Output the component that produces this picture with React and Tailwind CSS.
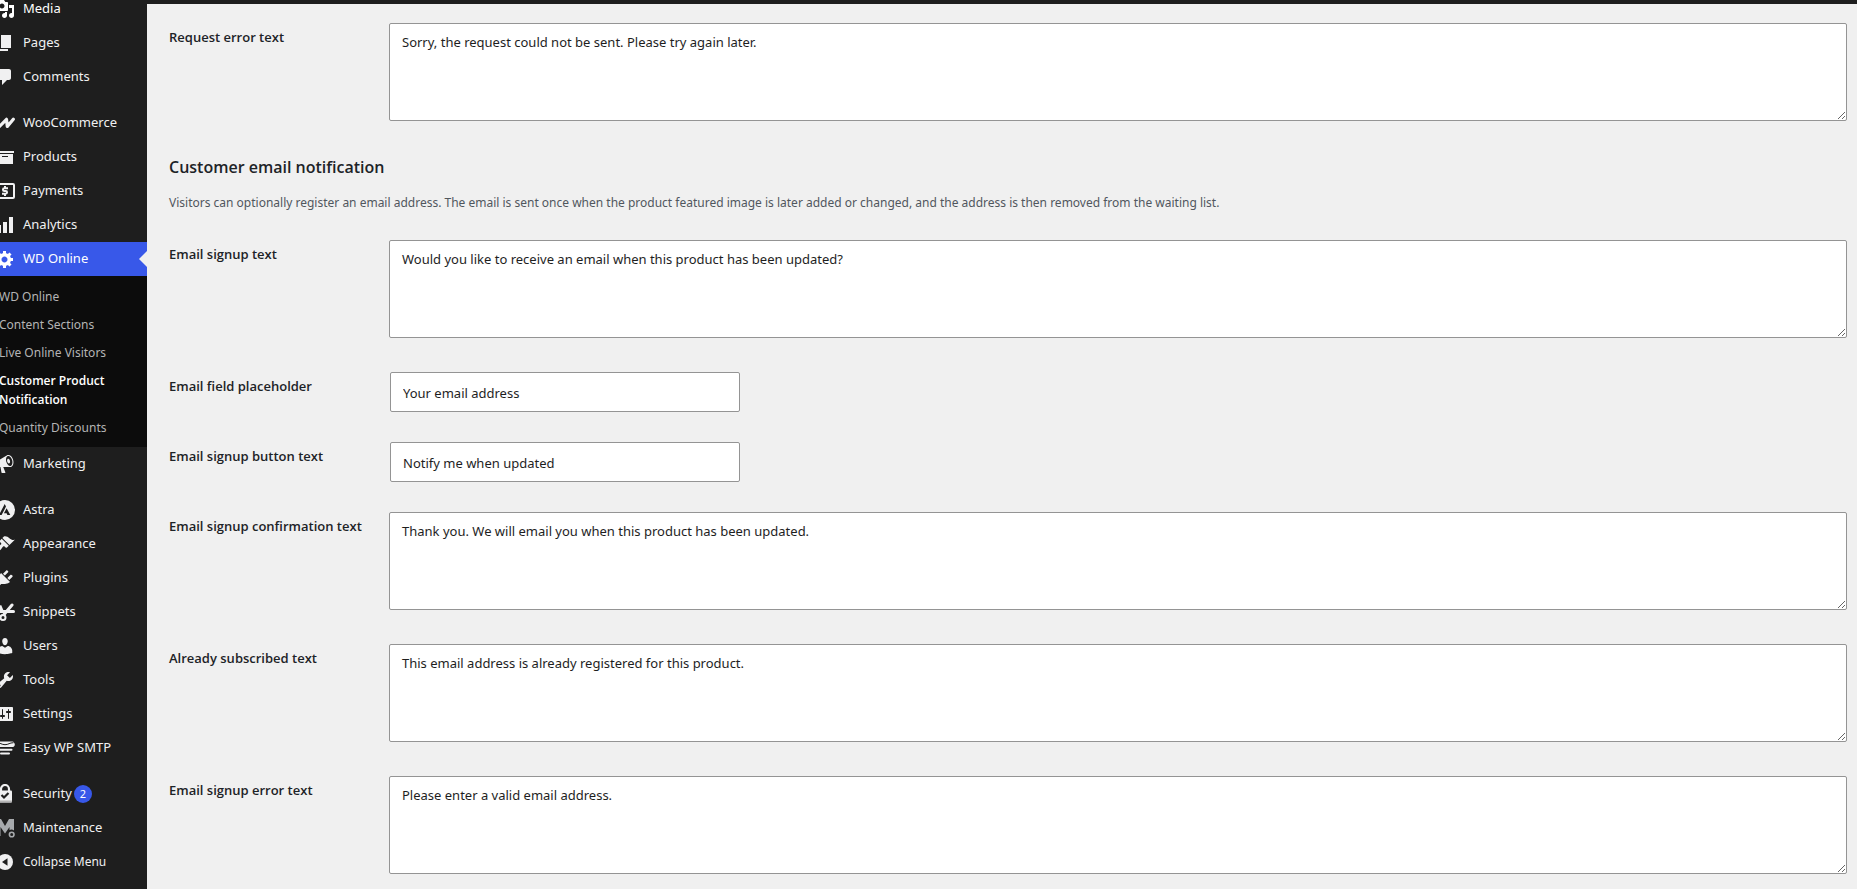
import React, { useState } from 'react';

const Dashicon = ({ d }) => (
    <svg viewBox="0 0 20 20" className="h-5 w-5" fill="currentColor" fillRule="evenodd" aria-hidden="true">
        <path d={d} />
    </svg>
);

const WooIcon = () => (
    <svg viewBox="0 0 20 20" className="h-5 w-5" fill="none" stroke="currentColor" strokeWidth="3.2" strokeLinejoin="round" strokeLinecap="round" aria-hidden="true">
        <path d="M1.500 6.300 4.500 13.500 11.500 6.300 12.300 13.500 18.300 6.300" />
    </svg>
);

const PaymentsIcon = () => (
    <svg viewBox="0 0 20 20" className="h-5 w-5" fill="none" stroke="currentColor" strokeWidth="2" aria-hidden="true">
        <rect x="1" y="3" width="18" height="14" rx="1" />
        <path d="M13 7.300H9.300a1.350 1.350 0 0 0 0 2.700h1.400a1.350 1.350 0 0 1 0 2.700H7M10 5v2.500M10 12.500V15" />
    </svg>
);

const AstraIcon = () => (
    <svg viewBox="0 0 20 20" className="h-5 w-5" aria-hidden="true">
        <circle cx="10" cy="10" r="10" fill="currentColor" />
        <path d="M9.700 4 4 15h2.600L11 6.600zM11.600 8.200 8.900 13.300h2.700l.8 1.700h2.900z" fill="#1e1e1e" />
    </svg>
);

const SnippetsIcon = () => (
    <svg viewBox="0 0 20 20" className="h-5 w-5" fill="none" stroke="currentColor" aria-hidden="true">
        <circle cx="3.500" cy="7" r="2.400" strokeWidth="2" />
        <circle cx="8" cy="15.500" r="2.500" strokeWidth="2" />
        <path d="M5.500 9.500h13M9 12.500l8-9.500" strokeWidth="3" strokeLinecap="round" />
        <path d="M5 3.500l3 7" strokeWidth="2.500" />
    </svg>
);

const SmtpIcon = () => (
    <svg viewBox="0 0 20 20" className="h-5 w-5" aria-hidden="true">
        <path d="M3 3.500h14a2 2 0 0 1 2 1.200c1.200.8 1.200 3.300-.8 4.300H1.800C-.2 8-.2 5.500 1 4.700a2 2 0 0 1 2-1.200z" fill="currentColor" />
        <path d="M1.500 4.700c4 0 5 2 8.500 2s4.500-2 8.500-2" fill="none" stroke="#1e1e1e" />
        <path d="M3.500 11.800h13M6 15.500h8" stroke="currentColor" strokeWidth="2" strokeLinecap="round" />
    </svg>
);

const LockIcon = () => (
    <svg viewBox="0 0 20 20" className="h-5 w-5" fill="none" aria-hidden="true">
        <path d="M6 8V5a4 4 0 0 1 8 0v3" stroke="currentColor" strokeWidth="2.200" />
        <rect x="3" y="6.500" width="14" height="12" rx="1" fill="currentColor" />
        <path d="M3 16.500h14v1a1 1 0 0 1-1 1H4a1 1 0 0 1-1-1z" fill="#b4b4b4" />
        <path d="m6.500 11 2.500 2.500L13.500 9" stroke="#1e1e1e" strokeWidth="2.200" />
    </svg>
);

const MaintenanceIcon = () => (
    <svg viewBox="0 0 20 20" className="h-5 w-5 text-[#a7aaad]" aria-hidden="true">
        <path d="M1 1h5l4 7 4-7h5v11.500a4 4 0 0 0-4.500-.5V9L10 15.500 5.500 9v9H1z" fill="currentColor" />
        <circle cx="16.700" cy="16.500" r="2.300" fill="none" stroke="currentColor" strokeWidth="1.600" />
    </svg>
);

const CollapseIcon = () => (
    <svg viewBox="0 0 20 20" className="h-5 w-5" aria-hidden="true">
        <circle cx="10" cy="10" r="8" fill="currentColor" />
        <path d="M12.500 6.200v7.600L7 10z" fill="#1e1e1e" />
    </svg>
);

const ICONS = {
    media: 'M13 11V4c0-.55-.45-1-1-1h-1.670L9 1H5L3.670 3H2c-.55 0-1 .45-1 1v7c0 .55.45 1 1 1h10c.55 0 1-.45 1-1zM7 4.500c1.380 0 2.500 1.120 2.500 2.500S8.380 9.500 7 9.500 4.500 8.380 4.500 7 5.620 4.500 7 4.500zM14 6h5v10.500c0 1.380-1.120 2.500-2.500 2.500S14 17.880 14 16.500s1.120-2.500 2.500-2.500c.17 0 .34.02.5.05V9h-3V6zm-4 8.050V13h2v3.500c0 1.380-1.120 2.500-2.500 2.500S7 17.880 7 16.500 8.120 14 9.500 14c.17 0 .34.02.5.05z',
    page: 'M6 15V2h10v13H6zm-1 1h8v2H3V5h2v11z',
    comments: 'M5 2h9c1.100 0 2 .9 2 2v7c0 1.100-.9 2-2 2h-2l-5 5v-5H5c-1.100 0-2-.9-2-2V4c0-1.100.9-2 2-2z',
    archive: 'M19 4v2H1V4h18zM2 7h16v10H2V7zm11 3V9H7v1h6z',
    chart: 'M18 18V2h-4v16h4zm-6 0V7H8v11h4zm-6 0v-8H2v8h4z',
    generic: 'M18 12h-2.180c-.17.7-.44 1.350-.81 1.930l1.540 1.540-2.100 2.100-1.540-1.540c-.58.36-1.230.63-1.910.79V19H8v-2.180c-.68-.16-1.330-.43-1.910-.79l-1.540 1.540-2.120-2.120 1.540-1.540c-.36-.58-.63-1.230-.79-1.910H1V9.030h2.170c.16-.7.44-1.350.8-1.940L2.430 5.550l2.100-2.100 1.540 1.540c.58-.37 1.240-.64 1.930-.81V2h3v2.180c.68.16 1.330.43 1.910.79l1.540-1.540 2.120 2.120-1.540 1.540c.36.59.64 1.240.8 1.940H18V12zm-8.500 1.500c1.660 0 3-1.340 3-3s-1.340-3-3-3-3 1.340-3 3 1.340 3 3 3z',
    megaphone: 'M18.150 5.940c.46 1.620.38 3.220-.02 4.480-.42 1.280-1.260 2.180-2.300 2.480-.16.06-.26.06-.4.06-.06.02-.12.02-.18.02-.06.02-.14.02-.22.02h-6.800l2.220 5.500c.02.14-.06.26-.14.34-.08.1-.24.16-.34.16H6.950c-.1 0-.26-.06-.34-.16-.08-.08-.16-.2-.14-.34l-1-5.500H4.250l-.02-.02c-.5.06-1.080-.18-1.540-.62s-.88-1.080-1.060-1.880c-.24-.8-.2-1.560-.02-2.200.18-.62.58-1.080 1.060-1.300l.02-.02 9-5.400c.1-.06.18-.1.24-.16.06-.04.14-.08.24-.12.16-.08.28-.12.5-.18 1.040-.3 2.240.1 3.220.98s1.840 2.240 2.260 3.860zm-2.580 5.980h-.02c.4-.1.74-.34 1.040-.7.58-.7.86-1.760.86-3.040 0-.64-.1-1.300-.28-1.980-.34-1.360-1.020-2.500-1.780-3.240s-1.680-1.100-2.460-.88c-.82.22-1.400.96-1.700 2-.32 1.040-.28 2.360.06 3.720.38 1.360 1 2.500 1.800 3.240.78.74 1.620 1.100 2.480.88zm-2.540-7.080c.22-.04.42-.02.62.04.38.16.76.48 1.020 1s.42 1.200.42 1.780c0 .3-.04.56-.12.8-.18.48-.44.84-.86.94-.34.1-.8-.06-1.140-.4s-.64-.86-.78-1.500c-.18-.62-.12-1.240.02-1.720s.48-.84.82-.94z',
    appearance: 'M14.480 11.060L7.410 3.990l1.500-1.500c.5-.56 2.300-.47 3.510.32 1.210.8 1.430 1.280 2.910 2.100 1.180.64 2.450 1.260 4.450.85zm-.71.71L6.700 4.700 4.930 6.470c-.39.39-.39 1.020 0 1.410l1.060 1.060c.39.39.39 1.030 0 1.420-.6.6-1.430 1.110-2.210 1.690-.35.26-.7.53-1.010.84C1.430 14.230.4 16.080 1.400 17.070c.99 1 2.840-.03 4.180-1.360.31-.31.58-.66.85-1.020.57-.78 1.080-1.610 1.690-2.210.39-.39 1.020-.39 1.410 0l1.060 1.060c.39.39 1.020.39 1.410 0z',
    plugins: 'M13.110 4.360L9.870 7.600 8 5.730l3.240-3.240c.35-.34 1.050-.2 1.560.32.52.51.66 1.210.31 1.550zm-8 1.770l.91-1.120 9.010 9.010-1.190.84c-.71.71-2.630 1.160-3.820 1.160H6.140L4.900 17.260c-.59.59-1.540.59-2.120 0-.59-.58-.59-1.530 0-2.120l1.240-1.240v-3.880c0-1.130.4-3.190 1.090-3.890zm7.260 3.970l3.240-3.240c.34-.35 1.040-.21 1.550.31.52.51.66 1.210.31 1.550l-3.240 3.250z',
    users: 'M10 9.250c-2.270 0-2.730-3.440-2.730-3.440C7 4.020 7.820 2 9.970 2c2.160 0 2.980 2.020 2.710 3.810 0 0-.41 3.440-2.680 3.440zm0 2.570L12.720 10c2.390 0 4.520 2.330 4.520 4.530v2.490s-3.650 1.130-7.240 1.130c-3.650 0-7.240-1.130-7.240-1.130v-2.490c0-2.250 1.940-4.480 4.470-4.480z',
    tools: 'M16.680 9.770c-1.340 1.340-3.300 1.670-4.950.99l-5.410 6.520c-.99.99-2.590.99-3.580 0s-.99-2.590 0-3.570l6.520-5.420c-.68-1.650-.35-3.610.99-4.950 1.280-1.280 3.120-1.620 4.720-1.060l-2.890 2.890 2.820 2.820 2.860-2.870c.53 1.580.18 3.390-1.080 4.650zM3.810 16.210c.4.39 1.040.39 1.430 0 .4-.4.4-1.040 0-1.430-.39-.4-1.030-.4-1.430 0-.39.39-.39 1.030 0 1.430z',
    settings: 'M18 16V4c0-.55-.45-1-1-1H3c-.55 0-1 .45-1 1v12c0 .55.45 1 1 1h14c.55 0 1-.45 1-1zM8 11h1c.55 0 1 .45 1 1s-.45 1-1 1H8v1.500c0 .28-.22.5-.5.5s-.5-.22-.5-.5V13H6c-.55 0-1-.45-1-1s.45-1 1-1h1V5.500c0-.28.22-.5.5-.5s.5.22.5.5V11zm5-2h-1c-.55 0-1-.45-1-1s.45-1 1-1h1V5.500c0-.28.22-.5.5-.5s.5.22.5.5V7h1c.55 0 1 .45 1 1s-.45 1-1 1h-1v5.500c0 .28-.22.5-.5.5s-.5-.22-.5-.5V9z',
};

const menuGroups = [
    [
        { label: 'Media', icon: <Dashicon d={ICONS.media} /> },
        { label: 'Pages', icon: <Dashicon d={ICONS.page} /> },
        { label: 'Comments', icon: <Dashicon d={ICONS.comments} /> },
    ],
    [
        { label: 'WooCommerce', icon: <WooIcon /> },
        { label: 'Products', icon: <Dashicon d={ICONS.archive} /> },
        { label: 'Payments', icon: <PaymentsIcon /> },
        { label: 'Analytics', icon: <Dashicon d={ICONS.chart} /> },
        {
            label: 'WD Online',
            icon: <Dashicon d={ICONS.generic} />,
            children: ['WD Online', 'Content Sections', 'Live Online Visitors', 'Customer Product Notification', 'Quantity Discounts'],
        },
        { label: 'Marketing', icon: <Dashicon d={ICONS.megaphone} /> },
    ],
    [
        { label: 'Astra', icon: <AstraIcon /> },
        { label: 'Appearance', icon: <Dashicon d={ICONS.appearance} /> },
        { label: 'Plugins', icon: <Dashicon d={ICONS.plugins} /> },
        { label: 'Snippets', icon: <SnippetsIcon /> },
        { label: 'Users', icon: <Dashicon d={ICONS.users} /> },
        { label: 'Tools', icon: <Dashicon d={ICONS.tools} /> },
        { label: 'Settings', icon: <Dashicon d={ICONS.settings} /> },
        { label: 'Easy WP SMTP', icon: <SmtpIcon /> },
    ],
    [
        { label: 'Security', icon: <LockIcon />, count: 2 },
        { label: 'Maintenance', icon: <MaintenanceIcon /> },
    ],
];

const emailFields = [
    { id: 'signup_text', label: 'Email signup text', value: 'Would you like to receive an email when this product has been updated?', multiline: true },
    { id: 'placeholder', label: 'Email field placeholder', value: 'Your email address' },
    { id: 'button_text', label: 'Email signup button text', value: 'Notify me when updated' },
    { id: 'confirmation_text', label: 'Email signup confirmation text', value: 'Thank you. We will email you when this product has been updated.', multiline: true },
    { id: 'subscribed_text', label: 'Already subscribed text', value: 'This email address is already registered for this product.', multiline: true },
    { id: 'signup_error', label: 'Email signup error text', value: 'Please enter a valid email address.', multiline: true },
];

const Submenu = ({ items }) => (
    <ul className="bg-[#0c0c0c] pt-[7px] pb-[5px] text-xs">
        {items.map(item => (
            <li key={item}>
                <a
                    href="#"
                    className={item === 'Customer Product Notification'
                        ? "block pt-1 pr-6 pb-[5px] pl-3 font-['Open_Sans',sans-serif] leading-[19px] font-semibold text-white"
                        : 'block py-[5px] pr-3 pl-3 leading-[18px] text-[#b4b4b4] hover:text-white'}
                >
                    {item}
                </a>
            </li>
        ))}
    </ul>
);

const MenuItem = ({ item }) => (
    <li>
        <a
            href="#"
            className={item.children
                ? 'relative flex h-[34px] items-center bg-[#3858e9] text-white'
                : 'flex h-[34px] items-center text-[#f0f0f1] hover:text-white'}
        >
            <span className="flex w-9 shrink-0 justify-center">{item.icon}</span>
            {item.label}
            {item.count && (
                <span className="ml-[2px] flex h-[18px] w-[18px] items-center justify-center rounded-full bg-[#3858e9] text-[11px] text-white">
                    {item.count}
                </span>
            )}
            {item.children && (
                <span className="absolute top-[9px] right-0 border-8 border-transparent border-r-[#f0f0f0]" />
            )}
        </a>
        {item.children && <Submenu items={item.children} />}
    </li>
);

const Sidebar = () => (
    <nav className="w-[147px] shrink-0 overflow-hidden bg-[#1e1e1e]">
        <div className="-mt-2 -ml-[13px] flex flex-col gap-3">
            {menuGroups.map((group, i) => (
                <ul key={i}>
                    {group.map(item => <MenuItem key={item.label} item={item} />)}
                    {i === menuGroups.length - 1 && (
                        <li>
                            <button type="button" className="flex h-[34px] w-full items-center text-xs text-[#f0f0f1]">
                                <span className="flex w-9 shrink-0 justify-center"><CollapseIcon /></span>
                                Collapse Menu
                            </button>
                        </li>
                    )}
                </ul>
            ))}
        </div>
    </nav>
);

const FieldRow = ({ field }) => {
    const [value, setValue] = useState(field.value);

    return (
        <div className="flex">
            <label htmlFor={field.id} className="w-[220px] shrink-0 py-5 pr-2 font-['Open_Sans',sans-serif] leading-[18px] font-semibold text-[#1d2327]">
                {field.label}
            </label>
            <div className="flex-1 py-[15px]">
                {field.multiline ? (
                    <textarea
                        id={field.id}
                        value={value}
                        onChange={(e) => setValue(e.target.value)}
                        className="mb-1 block h-[98px] w-full resize rounded-[2px] border border-[#949494] bg-white px-3 py-2 leading-5 text-[#1e1e1e]"
                    />
                ) : (
                    <input
                        id={field.id}
                        type="text"
                        value={value}
                        onChange={(e) => setValue(e.target.value)}
                        className="mx-px block h-10 w-[350px] rounded-[2px] border border-[#949494] bg-white px-3 pt-[2px] text-[#1e1e1e]"
                    />
                )}
            </div>
        </div>
    );
};

const App = () => (
    <div className="flex h-screen overflow-hidden bg-[#f0f0f0] font-['Noto_Sans',sans-serif] text-[13px]">
        <Sidebar />
        <div className="flex min-w-0 flex-1 flex-col">
            <header className="h-1 shrink-0 bg-[#1e1e1e]" />
            <main className="flex-1 overflow-hidden pt-1 pr-[10px] pl-[22px]">
                <form>
                    <FieldRow field={{ id: 'request_error', label: 'Request error text', value: 'Sorry, the request could not be sent. Please try again later.', multiline: true }} />
                    <h2 className="mt-4 font-['Open_Sans',sans-serif] text-base leading-[22px] font-semibold text-[#1d2327]">Customer email notification</h2>
                    <p className="mt-[15px] mb-3 text-xs leading-5 text-[#50575e]">
                        Visitors can optionally register an email address. The email is sent once when the product featured image is later added or changed, and the address is then removed from the waiting list.
                    </p>
                    {emailFields.map(field => <FieldRow key={field.id} field={field} />)}
                </form>
            </main>
        </div>
    </div>
);

export default App;
